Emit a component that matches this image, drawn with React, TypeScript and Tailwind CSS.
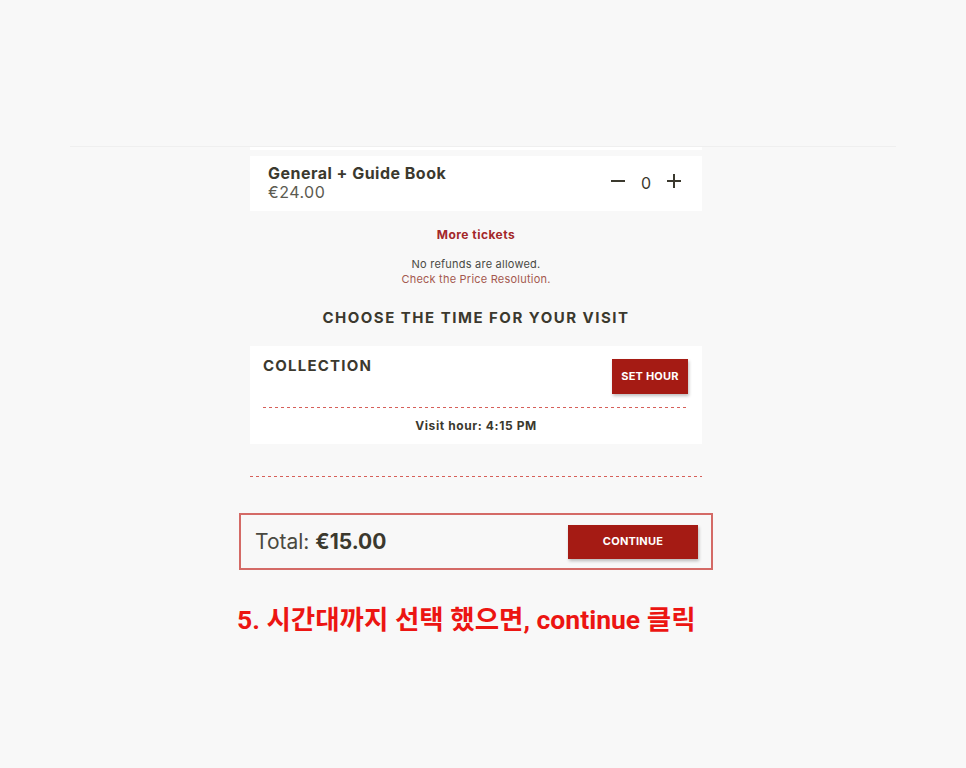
import React from 'react';

const font = { fontFamily: 'Inter, "Open Sans", sans-serif' };

export default function App() {
  return (
    <div className="min-h-screen w-full bg-[#f8f8f8] text-[#3b392e]" style={font}>
      <div className="pt-[146px] px-[70px]">
        <div className="h-px bg-[#efefef]" />
      </div>

      <div className="ml-[250px] w-[452px] flex flex-col">
        <div className="h-[3px] bg-white" />

        {/* ticket row */}
        <div className="mt-[6px] h-[55px] bg-white flex items-start justify-between pl-[18px] pr-[20px] pt-[8px]">
          <div>
            <div className="text-[16px] leading-[19px] font-bold tracking-[0.03em] text-[#3b392e]">General + Guide Book</div>
            <div className="text-[16px] leading-[19px] tracking-[0.03em] text-[#5b5a50]">€24.00</div>
          </div>
          <div className="flex items-center gap-[14px] mt-[7px] text-[#3b392e]">
            <svg width="16" height="16" viewBox="0 0 16 16"><path d="M1 8h14" stroke="currentColor" strokeWidth="2" /></svg>
            <span className="text-[16px] leading-[16px] mt-[4px] w-[12px] text-center">0</span>
            <svg width="16" height="16" viewBox="0 0 16 16"><path d="M1 8h14M8 1v14" stroke="currentColor" strokeWidth="2" /></svg>
          </div>
        </div>

        <div className="mt-[16px] text-center text-[12px] leading-[16px] font-bold tracking-[0.04em] text-[#a3282a]">More tickets</div>
        <div className="mt-[14px] text-center text-[11px] leading-[15px] tracking-[0.02em]">
          <div className="text-[#4a4a44]">No refunds are allowed.</div>
          <div className="text-[#a4584f]">Check the Price Resolution.</div>
        </div>

        <div className="mt-[21px] text-center text-[15px] leading-[20px] font-bold tracking-[0.1em] text-[#3b392e]">
          CHOOSE THE TIME FOR YOUR VISIT
        </div>

        {/* collection card */}
        <div className="mt-[18px] h-[98px] bg-white flex flex-col px-[13px]">
          <div className="flex items-start justify-between pr-px">
            <div className="mt-[10px] text-[15px] leading-[20px] font-bold tracking-[0.08em]">COLLECTION</div>
            <button className="mt-[13px] w-[76px] h-[35px] bg-[#a51b14] text-white text-[11px] font-bold tracking-[0.02em] shadow-[1px_2px_3px_rgba(0,0,0,0.25)]">
              SET HOUR
            </button>
          </div>
          <div className="mt-[13px] h-px bg-[repeating-linear-gradient(90deg,#d6605a_0_3px,transparent_3px_6px)]" />
          <div className="mt-[10px] text-center text-[12px] leading-[16px] font-bold tracking-[0.05em]">Visit hour: 4:15 PM</div>
        </div>

        <div className="mt-[32px] h-px bg-[repeating-linear-gradient(90deg,#d6605a_0_3px,transparent_3px_6px)]" />
      </div>

      {/* total */}
      <div className="ml-[239px] mt-[36px] w-[474px] h-[57px] border-2 border-[#d46a66] flex items-center justify-between pl-[14px] pr-[13px]">
        <div className="text-[21px] text-[#4a4940]">
          Total: <span className="font-bold text-[#3b392e]">€15.00</span>
        </div>
        <button className="w-[130px] h-[34px] bg-[#a51b14] text-white text-[11px] font-bold tracking-[0.02em] shadow-[1px_2px_3px_rgba(0,0,0,0.25)]">
          CONTINUE
        </button>
      </div>

      <div
        className="ml-[237px] mt-[34px] text-[26.5px] leading-[32px] font-bold text-[#ec1512]"
        style={{ fontFamily: 'Roboto, "Noto Sans CJK KR", sans-serif' }}
      >
        5. 시간대까지 선택 했으면, continue 클릭
      </div>
    </div>
  );
}
